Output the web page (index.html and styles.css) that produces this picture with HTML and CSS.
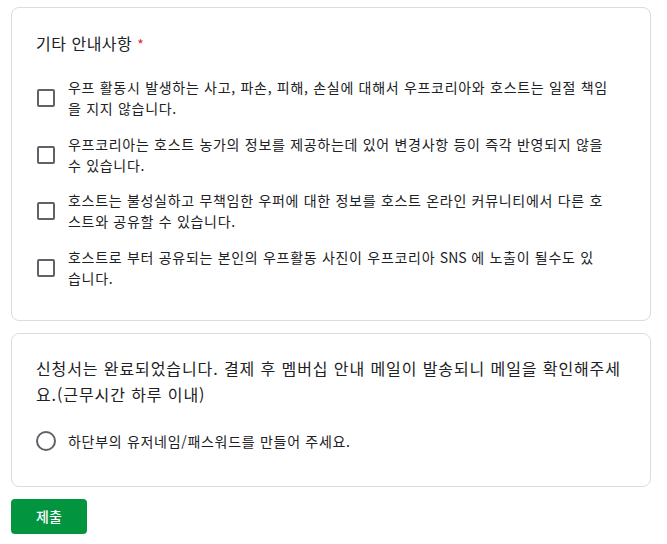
FILE: index.html
```html
<!DOCTYPE html>
<html lang="ko">
<head>
<meta charset="utf-8">
<link rel="stylesheet" href="styles.css">
</head>
<body>
<div class="page">
  <div class="card card-notes">
    <div class="title">기타 안내사항 <span class="req">*</span></div>
    <div class="options">
      <div class="option"><span class="checkbox"></span><span class="label">우프 활동시 발생하는 사고, 파손, 피해, 손실에 대해서 우프코리아와 호스트는 일절 책임을 지지 않습니다.</span></div>
      <div class="option"><span class="checkbox"></span><span class="label">우프코리아는 호스트 농가의 정보를 제공하는데 있어 변경사항 등이 즉각 반영되지 않을 수 있습니다.</span></div>
      <div class="option"><span class="checkbox"></span><span class="label">호스트는 불성실하고 무책임한 우퍼에 대한 정보를 호스트 온라인 커뮤니티에서 다른 호스트와 공유할 수 있습니다.</span></div>
      <div class="option"><span class="checkbox"></span><span class="label">호스트로 부터 공유되는 본인의 우프활동 사진이 우프코리아 <span class="latin">SNS</span> 에 노출이 될수도 있<br>습니다.</span></div>
    </div>
  </div>
  <div class="card card-done">
    <div class="question">신청서는 완료되었습니다. 결제 후 멤버십 안내 메일이 발송되니 메일을 확인해주세요.(근무시간 하루 이내)</div>
    <div class="radio-option"><span class="radio"></span><span class="label">하단부의 유저네임/패스워드를 만들어 주세요.</span></div>
  </div>
  <div class="actions"><button class="submit">제출</button></div>
</div>
</body>
</html>
```
FILE: styles.css
```css
html, body {
  margin: 0;
  padding: 0;
  background: #ffffff;
}
body {
  font-family: "Noto Sans CJK KR", "Noto Sans", Roboto, sans-serif;
  color: #202124;
}
.page {
  width: 640px;
  padding: 7px 0 0 11px;
  display: flex;
  flex-direction: column;
  gap: 12px;
}
.card {
  background: #fff;
  border: 1px solid #dadce0;
  border-radius: 8px;
}
.card-notes {
  padding: 23px 24px 31px 24px;
}
.title {
  font-size: 16px;
  line-height: 24px;
  letter-spacing: 0.5px;
}
.req {
  color: #d93025;
  font-size: 14px;
}
.options {
  margin-top: 21px;
  display: flex;
  flex-direction: column;
  gap: 14.5px;
}
.option {
  display: flex;
  align-items: center;
  gap: 13px;
  padding-right: 10px;
}
.checkbox {
  flex: none;
  width: 14px;
  height: 14px;
  margin-left: 1px;
  border: 2px solid #5f6368;
  border-radius: 2px;
}
.label {
  font-size: 14px;
  line-height: 21px;
  letter-spacing: 0.7px;
}
.latin {
  letter-spacing: 0;
}
.card-done {
  padding: 21px 24px 34px 24px;
}
.question {
  font-size: 16px;
  line-height: 26px;
  letter-spacing: 0.9px;
}
.radio-option {
  margin-top: 24px;
  display: flex;
  align-items: center;
  gap: 12px;
}
.radio {
  flex: none;
  width: 16px;
  height: 16px;
  border: 2px solid #5f6368;
  border-radius: 50%;
}
.actions {
  padding-top: 0;
}
.submit {
  width: 76px;
  height: 35px;
  border: none;
  border-radius: 4px;
  background: #03943f;
  color: #fff;
  font-family: "Noto Sans CJK KR", Roboto, sans-serif;
  font-size: 14px;
  font-weight: 500;
  padding: 0;
}
```
